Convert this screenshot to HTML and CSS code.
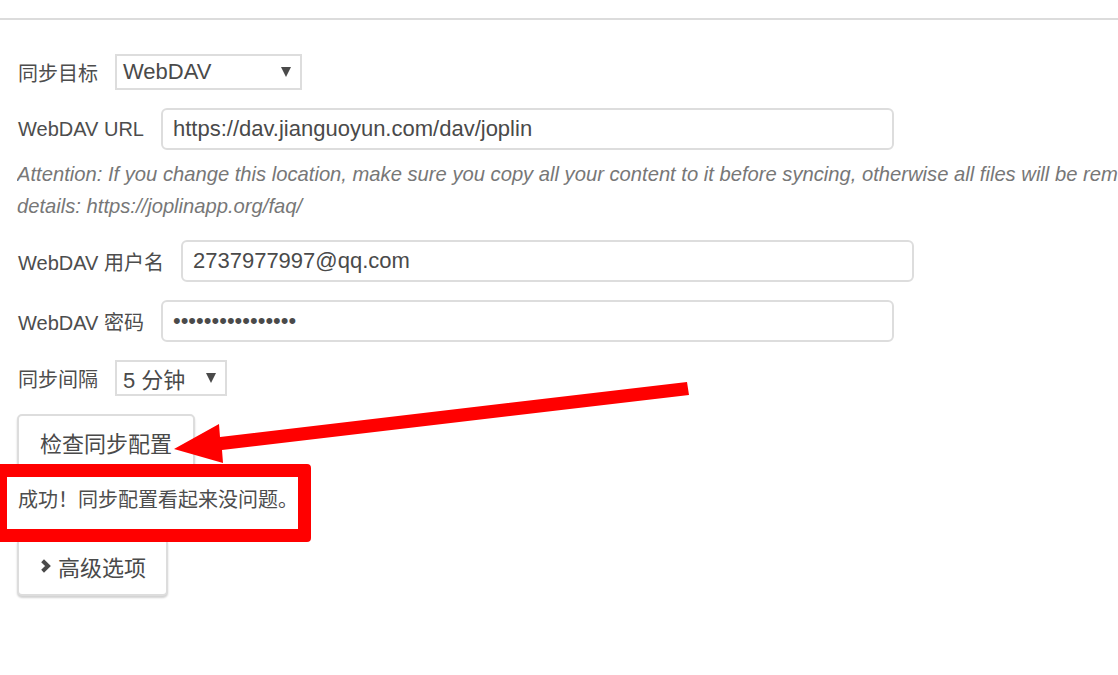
FILE: index.html
```html
<!DOCTYPE html>
<html lang="zh">
<head>
<meta charset="utf-8">
<title>同步</title>
<link rel="stylesheet" href="styles.css">
</head>
<body>
<div class="topbar"></div>
<main class="content">
  <div class="row">
    <label class="label">同步目标</label>
    <div class="select select-target"><span class="select-text">WebDAV</span><span class="caret"></span></div>
  </div>
  <div class="row row-gap">
    <label class="label">WebDAV URL</label>
    <div class="input">https://dav.jianguoyun.com/dav/joplin</div>
  </div>
  <p class="note">Attention: If you change this location, make sure you copy all your content to it before syncing, otherwise all files will be removed! See the FAQ for more<br>details: https://joplinapp.org/faq/</p>
  <div class="row row-gap">
    <label class="label">WebDAV 用户名</label>
    <div class="input">2737977997@qq.com</div>
  </div>
  <div class="row row-gap">
    <label class="label">WebDAV 密码</label>
    <div class="input input-pass">••••••••••••••••</div>
  </div>
  <div class="row row-gap">
    <label class="label">同步间隔</label>
    <div class="select select-interval"><span class="select-text">5 分钟</span><span class="caret"></span></div>
  </div>
  <button class="btn btn-check">检查同步配置</button>
  <p class="message">成功！同步配置看起来没问题。</p>
  <button class="btn btn-adv"><svg class="chev" width="11" height="14" viewBox="0 0 11 14"><path d="M2.6 1.8 L8 7 L2.6 12.2" fill="none" stroke="#4a4a4a" stroke-width="4" stroke-linejoin="miter"/></svg>高级选项</button>
</main>
<svg class="arrow" width="1118" height="675" viewBox="0 0 1118 675">
  <polygon points="174,449 219,424 220,437 687,382 689,395 222,450 223,463" fill="#ff0000"/>
</svg>
</body>
</html>
```
FILE: styles.css
```css
html, body {
  margin: 0;
  padding: 0;
  background: #ffffff;
}
body {
  position: relative;
  width: 1118px;
  height: 675px;
  overflow: hidden;
  font-family: "Liberation Sans", "Noto Sans CJK SC", sans-serif;
  color: #4d4d4d;
}
.topbar {
  height: 18px;
  border-bottom: 2px solid #dcdcdc;
}
.content {
  padding: 34px 0 0 17px;
}
.row {
  display: flex;
  align-items: center;
  gap: 17px;
}
.row-gap {
  margin-top: 18px;
}
.label {
  font-size: 20px;
  padding-left: 1px;
}
.select {
  box-sizing: border-box;
  height: 36px;
  border: 2px solid #dddddd;
  display: flex;
  align-items: center;
  justify-content: space-between;
  padding: 0 9px 0 6px;
  font-size: 22px;
  color: #4a4a4a;
}
.select-target { width: 187px; }
.select-interval { width: 112px; }
.caret {
  width: 0;
  height: 0;
  border-left: 5px solid transparent;
  border-right: 5px solid transparent;
  border-top: 10px solid #4a4a4a;
}
.input {
  box-sizing: border-box;
  width: 733px;
  height: 42px;
  border: 2px solid #dddddd;
  border-radius: 6px;
  padding: 0 10px;
  display: flex;
  align-items: center;
  font-size: 22px;
  color: #4a4a4a;
}
.input-pass {
  font-size: 22px;
}
.note {
  margin: 8px 0 0 0;
  width: 1101px;
  overflow: hidden;
  font-size: 20.2px;
  font-style: italic;
  line-height: 32px;
  color: #777777;
  white-space: nowrap;
}
.btn {
  box-sizing: border-box;
  display: flex;
  align-items: center;
  height: 58px;
  margin-top: 18px;
  padding: 0 20px 2px 21px;
  background: #ffffff;
  border: 2px solid #dddddd;
  border-radius: 5px;
  box-shadow: 0 2px 2px rgba(0, 0, 0, 0.18);
  font-family: "Liberation Sans", "Noto Sans CJK SC", sans-serif;
  font-size: 22px;
  color: #4a4a4a;
}
.btn-check {
  width: 178px;
}
.btn-adv {
  width: 151px;
  margin-top: 0;
  gap: 7px;
}
.chev {
  flex: none;
}
.message {
  position: relative;
  margin: 14px 0 24px 1px;
  font-size: 20px;
  line-height: 28px;
}
.message::before {
  content: "";
  position: absolute;
  left: -24px;
  top: -22px;
  width: 317px;
  height: 78px;
  box-sizing: border-box;
  border: 13px solid #ff0000;
  border-radius: 4px;
}
.arrow {
  position: absolute;
  left: 0;
  top: 0;
  pointer-events: none;
}
```
